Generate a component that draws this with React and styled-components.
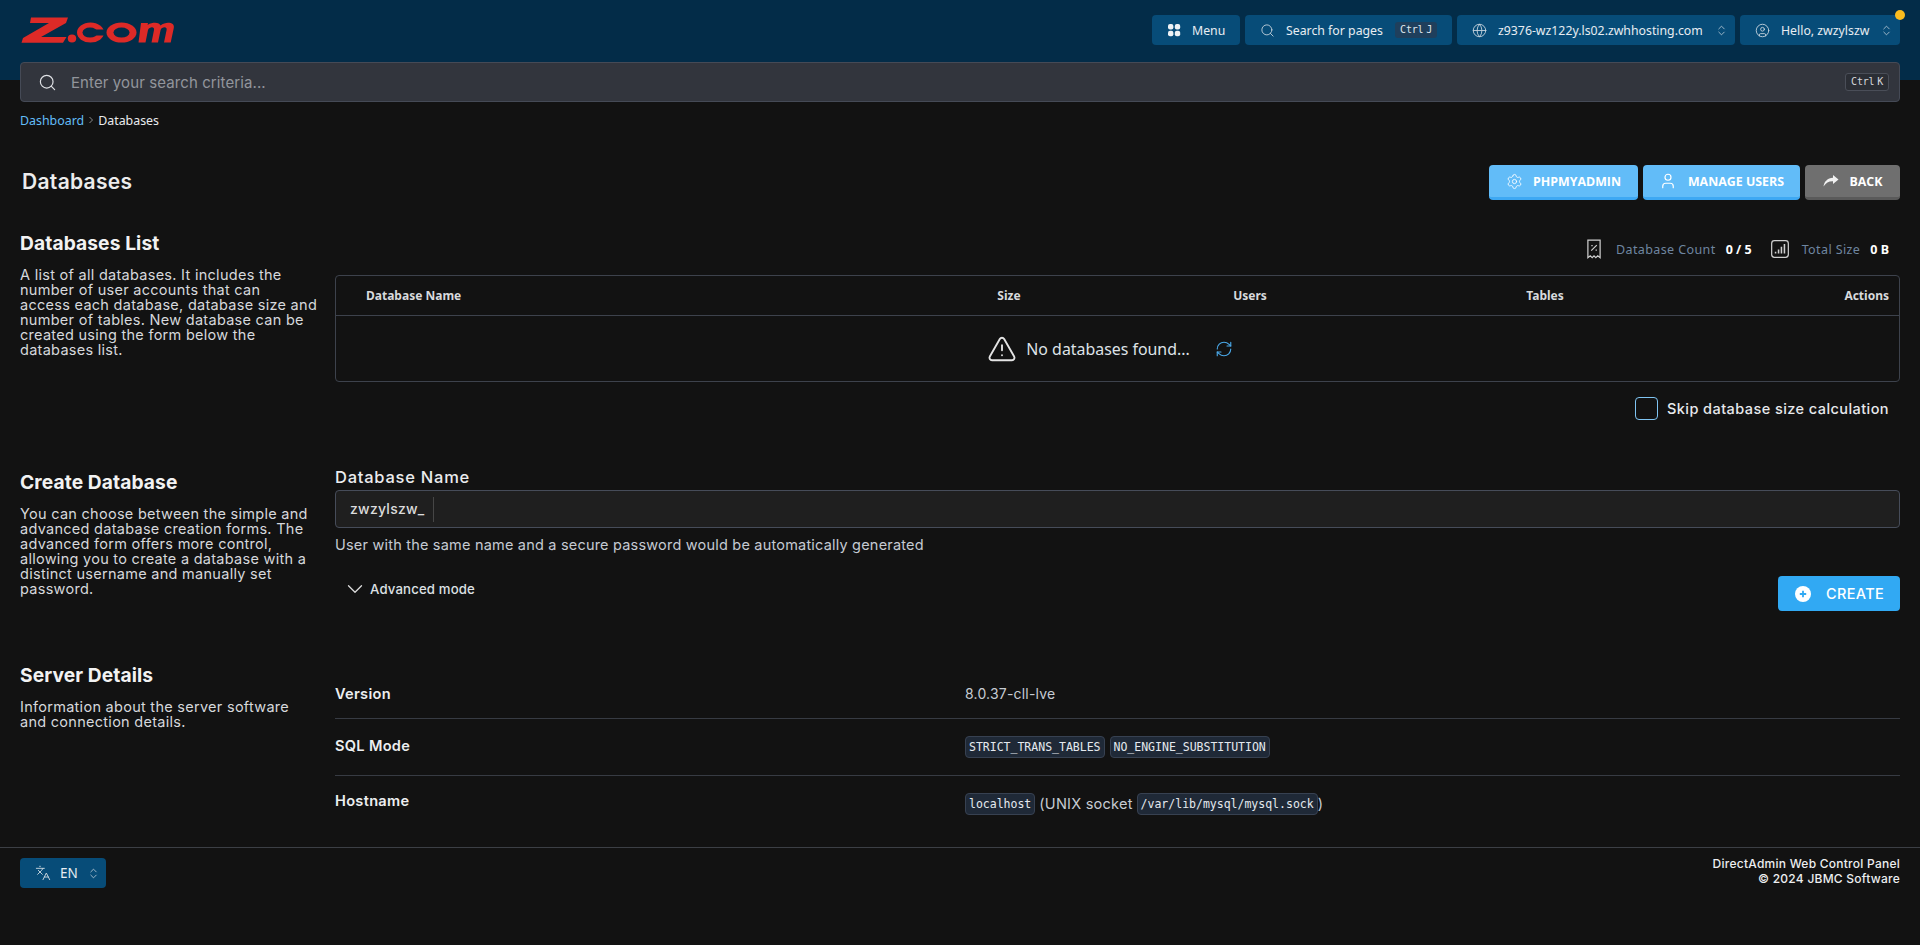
import React from 'react'
import styled, { createGlobalStyle } from 'styled-components'
import {
  Search,
  Globe,
  CircleUser,
  ChevronsUpDown,
  Settings,
  User,
  TriangleAlert,
  RefreshCw,
  ChevronDown,
  Languages,
} from 'lucide-react'

const GlobalStyle = createGlobalStyle`
  html, body {
    margin: 0;
    padding: 0;
    background: #121212;
  }
  body {
    color: #e4e6ea;
    font-family: Inter, "Noto Sans", sans-serif;
    font-size: 14px;
  }
  * { box-sizing: border-box; }
`
const Page = styled.div`
  min-height: 945px;
  background: #121212;
`
const Top = styled.header`
  padding: 0 20px;
  background: linear-gradient(#032c48 80px, transparent 80px);
`
const TopBar = styled.div`
  height: 62px;
  display: flex;
  align-items: center;
  justify-content: space-between;
`
const Logo = styled.svg`
  display: block;
  width: 156px;
  height: 28px;
`
const TopActions = styled.nav`
  display: flex;
  gap: 5px;
  margin-bottom: 2px;
`
const NavBtn = styled.button`
  position: relative;
  width: ${p => p.$w}px;
  height: 30px;
  display: flex;
  align-items: center;
  padding: 0 7px 0 15px;
  gap: 11px;
  color: #e8edf2;
  background: #074c78;
  border: none;
  border-radius: 4px;
  font-family: "Noto Sans", sans-serif;
  font-size: 12.3px;
  white-space: nowrap;
  svg { color: #c9d6df; flex: none; }
`
const Chevrons = styled(ChevronsUpDown)`
  margin-left: auto;
`
const Dot = styled.i`
  position: absolute;
  top: -5px;
  right: -5px;
  width: 10px;
  height: 10px;
  border-radius: 50%;
  background: #fbbc1e;
`
const Kbd = styled.span`
  display: inline-block;
  padding: 0 5px;
  height: 16px;
  line-height: 16px;
  border-radius: 3px;
  background: #1f3f5c;
  font-family: "DejaVu Sans Mono", monospace;
  font-size: 10px;
  letter-spacing: -0.2px;
  word-spacing: -3px;
  color: #dfe6ec;
`
const NavKbd = styled(Kbd)`
  margin: 0 8px 0 auto;
`
const SearchBar = styled.div`
  height: 40px;
  display: flex;
  align-items: center;
  padding: 0 10px 0 17px;
  background: #32353d;
  border: 1px solid #454a56;
  border-radius: 4px;
  svg { color: #dfe1e5; }
`
const SearchText = styled.span`
  flex: 1;
  margin-left: 14px;
  font-size: 15px;
  letter-spacing: 0.1px;
  color: #92959c;
`
const SearchKbd = styled(Kbd)`
  height: 18px;
  line-height: 16px;
  background: #2b2e35;
  border: 1px solid #4a4e58;
  color: #d5d7db;
`
const Crumbs = styled.div`
  display: flex;
  align-items: center;
  gap: 3px;
  margin: 10px 20px 0;
  height: 16px;
  font-family: "Noto Sans", sans-serif;
  font-size: 12.4px;
  color: #e9ebee;
  svg { color: #8a8a8a; }
`
const CrumbLink = styled.a`
  color: #62bdf8;
`
const TitleRow = styled.div`
  display: flex;
  align-items: flex-start;
  justify-content: space-between;
  margin: 37px 20px 0 22px;
`
const Title = styled.h1`
  margin: 4px 0 0;
  font-size: 21px;
  font-weight: 600;
  letter-spacing: 0.3px;
  color: #ececec;
`
const Buttons = styled.div`
  display: flex;
  gap: 5px;
`
const ActionBtn = styled.button`
  height: 35px;
  width: ${p => p.$w}px;
  display: flex;
  align-items: center;
  justify-content: center;
  gap: ${p => p.$gap || 11}px;
  color: #fff;
  background: ${p => (p.$grey ? '#6f6f6f' : '#62bcf8')};
  border: none;
  border-bottom: 3px solid ${p => (p.$grey ? '#5a5a5a' : '#3ea8f3')};
  border-radius: 4px;
  font-family: "Open Sans", sans-serif;
  font-size: 12.4px;
  font-weight: 700;
  padding: 0;
`
const Section = styled.section`
  display: grid;
  grid-template-columns: 315px 1fr;
  margin: ${p => p.$mt}px 20px 0;
`
const Side = styled.div`
  padding-top: ${p => p.$pt || 0}px;
`
const SideTitle = styled.h2`
  margin: 0 0 13px;
  font-size: 19.2px;
  font-weight: 700;
  line-height: 22px;
  letter-spacing: 0.1px;
  color: #f2f2f2;
`
const SideText = styled.p`
  margin: 0;
  width: 310px;
  font-size: 14.5px;
  line-height: 15px;
  letter-spacing: 0.28px;
  color: #d6d8dc;
`
const Stats = styled.div`
  display: flex;
  justify-content: flex-end;
  align-items: center;
  height: 22px;
  margin-top: 8px;
  padding-right: 11px;
  font-family: "Noto Sans", sans-serif;
  font-size: 12.5px;
`
const StatIcon = styled.svg`
  width: 20px;
  height: 20px;
  color: #cfcfcf;
  margin-left: ${p => p.$ml || 0}px;
`
const StatLabel = styled.span`
  margin-left: 12px;
  letter-spacing: 0.4px;
  color: #6f86a0;
`
const StatValue = styled.b`
  margin-left: 10px;
  color: #fff;
  font-weight: 700;
`
const Table = styled.div`
  margin-top: 15px;
  border: 1px solid #3d424c;
  border-radius: 4px;
`
const TableHead = styled.div`
  display: grid;
  grid-template-columns: 553px 240px 242px 348px 1fr;
  height: 40px;
  align-items: center;
  border-bottom: 1px solid #3d424c;
  font-family: "Noto Sans", sans-serif;
  font-size: 12px;
  font-weight: 700;
  color: #d8dadd;
`
const Th = styled.div`
  text-align: ${p => p.$align || 'center'};
  padding: ${p => p.$pad || 0};
`
const EmptyRow = styled.div`
  height: 65px;
  display: flex;
  align-items: center;
  justify-content: center;
  padding-right: 15px;
  font-family: "Noto Sans", sans-serif;
  font-size: 15.9px;
  color: #dfe3e8;
`
const EmptyText = styled.span`
  margin: 0 25px 0 9px;
`
const SkipRow = styled.label`
  display: flex;
  justify-content: flex-end;
  align-items: center;
  margin-top: 15px;
  padding-right: 11px;
  font-size: 14.5px;
  font-weight: 500;
  letter-spacing: 0.43px;
  color: #e7e9ec;
`
const Check = styled.span`
  width: 23px;
  height: 23px;
  margin-right: 9px;
  border: 1px solid #7fc4f2;
  border-radius: 4px;
`
const FieldLabel = styled.div`
  height: 18px;
  line-height: 18px;
  margin-bottom: 4px;
  font-size: 16.5px;
  font-weight: 500;
  letter-spacing: 0.75px;
  color: #ebecee;
`
const InputBox = styled.div`
  height: 38px;
  display: flex;
  align-items: center;
  padding-left: 14px;
  background: #1f1f1f;
  border: 1px solid #464c59;
  border-radius: 4px;
`
const Prefix = styled.span`
  height: 25px;
  line-height: 24px;
  padding-right: 8px;
  border-right: 1px solid #464646;
  font-size: 14px;
  font-weight: 500;
  letter-spacing: 0.25px;
  color: #dcdcdc;
`
const Helper = styled.div`
  margin-top: 8px;
  height: 17px;
  line-height: 17px;
  font-size: 14.5px;
  letter-spacing: 0.2px;
  color: #c5cad2;
`
const FormFoot = styled.div`
  display: flex;
  justify-content: space-between;
  align-items: flex-start;
  margin-top: 23px;
`
const Advanced = styled.div`
  display: flex;
  align-items: center;
  gap: 2px;
  margin: 0 0 0 7px;
  font-size: 13.2px;
  font-weight: 500;
  letter-spacing: 0.15px;
  color: #dde0e4;
  svg { color: #dcdcdc; }
`
const CreateBtn = styled.button`
  width: 122px;
  height: 35px;
  display: flex;
  align-items: center;
  gap: 15px;
  padding: 0 0 0 17px;
  color: #fff;
  background: #31a9f3;
  border: none;
  border-radius: 4px;
  font-family: Inter, sans-serif;
  font-size: 14.5px;
  font-weight: 500;
  letter-spacing: 0.35px;
`
const DetailRow = styled.div`
  display: grid;
  grid-template-columns: 630px 1fr;
  align-items: center;
  height: ${p => p.$h}px;
  padding-top: ${p => p.$pt || 0}px;
  border-bottom: ${p => (p.$last ? 'none' : '1px solid #373b43')};
`
const DetailKey = styled.div`
  padding-bottom: ${p => p.$pb || 0}px;
  font-size: 14.6px;
  font-weight: 600;
  letter-spacing: 0.3px;
  color: #eceef0;
`
const DetailVal = styled.div`
  display: flex;
  align-items: center;
  gap: ${p => p.$gap || 0}px;
  font-size: 14px;
  letter-spacing: 0.2px;
  color: #c6cbd2;
`
const Code = styled.code`
  display: inline-block;
  height: 22px;
  line-height: 20px;
  padding: 0 3px;
  background: #1f2937;
  border: 1px solid #374151;
  border-radius: 4px;
  font-family: "DejaVu Sans Mono", monospace;
  font-size: 11.55px;
  letter-spacing: -0.03px;
  color: #e5e9ef;
`
const Plain = styled.span`
  margin: ${p => p.$m || 0};
  font-size: 14.6px;
`
const Footer = styled.footer`
  display: flex;
  justify-content: space-between;
  align-items: flex-start;
  margin-top: 16px;
  padding: 10px 20px 0;
  border-top: 1px solid #3c3f45;
`
const LangBtn = styled(NavBtn)`
  font-size: 13.5px;
  gap: 9px;
`
const Legal = styled.div`
  margin-top: -2px;
  text-align: right;
  font-size: 12px;
  font-weight: 500;
  line-height: 15px;
  letter-spacing: 0.25px;
  color: #eceef0;
`

const ZLogo = () => (
  <Logo viewBox="0 0 156 28" role="img" aria-label="Z.com">
    <path fill="#dd2a27" d="M11 0.5 H48 L46 6 L21 20 H46.5 L43 25.8 H1.5 L3 21 L29 6 H10 Z" />
    <ellipse cx="52" cy="21.5" rx="4.2" ry="4" fill="#dd2a27" />
    <ellipse cx="70.5" cy="15.6" rx="13.5" ry="10" fill="#dd2a27" />
    <ellipse cx="70" cy="15.6" rx="7.5" ry="5" fill="#032c48" />
    <path fill="#032c48" d="M73 12.6 H86 L84 18.6 H72 Z" />
    <ellipse cx="101.5" cy="15.6" rx="15" ry="10" fill="#dd2a27" />
    <ellipse cx="101.5" cy="15.6" rx="8" ry="5" fill="#032c48" />
    <path
      fill="#dd2a27"
      d="M121 6 H128 L127.6 8 C130 6 133 5.7 135 5.7 C138 5.7 140 6.8 140.6 8.5 C142.5 6.5 146 5.7 148 5.7 C152 5.7 154.5 7.5 153.8 11 L150.7 25.5 H144 L146.6 13 C147 11.2 146 10.3 144.5 10.3 C143 10.3 141 11.2 140.6 13 L138 25.5 H131.5 L134 13 C134.4 11.2 133.4 10.3 132 10.3 C130.5 10.3 128.5 11.2 128 13 L125.5 25.5 H118.5 Z"
    />
  </Logo>
)

const GridIcon = () => (
  <svg width="14" height="14" viewBox="0 0 14 14" fill="#eef2f5">
    <rect x="1" y="1" width="5.4" height="5.4" rx="2" />
    <rect x="7.8" y="1" width="5.4" height="5.4" rx="2" />
    <rect x="1" y="7.8" width="5.4" height="5.4" rx="2" />
    <rect x="7.8" y="7.8" width="5.4" height="5.4" rx="2" />
  </svg>
)

const ShareArrow = () => (
  <svg width="16" height="14" viewBox="0 0 16 14" fill="#f1f1f1">
    <path d="M10 1 L15.5 5.5 L10 10 V7.2 C6 7 3 8.5 0.5 12.5 C1.2 7.5 4.5 4.2 10 3.8 Z" />
  </svg>
)

const CrumbArrow = () => (
  <svg width="8" height="8" viewBox="0 0 8 8" fill="none" stroke="currentColor" strokeWidth="1">
    <path d="M2.5 1 L5.5 4 L2.5 7" />
  </svg>
)

const ReceiptIcon = () => (
  <StatIcon viewBox="0 0 18 18" fill="none" stroke="currentColor" strokeWidth="1.1">
    <path d="M3.5 1 H14.5 V16.8 L12.4 15.2 L10.6 16.8 L9 15.2 L7.4 16.8 L5.6 15.2 L3.5 16.8 Z" />
    <path d="M6.5 10.5 L11.5 5.5 M6.6 6 h1.2 M10.4 10 h1.2" />
  </StatIcon>
)

const SignalIcon = () => (
  <StatIcon $ml={18} viewBox="0 0 18 18" fill="none" stroke="currentColor" strokeWidth="1.1">
    <rect x="1.5" y="1.5" width="15" height="15" rx="2.5" />
    <path d="M5 13 V11.5 M7.7 13 V9.5 M10.3 13 V7 M13 13 V4.5" strokeWidth="1.4" />
  </StatIcon>
)

const PlusDisc = () => (
  <svg width="16" height="16" viewBox="0 0 16 16">
    <circle cx="8" cy="8" r="8" fill="#fff" />
    <path d="M8 4.8 V11.2 M4.8 8 H11.2" stroke="#31a9f3" strokeWidth="1.8" />
  </svg>
)

export default function App() {
  return (
    <Page>
      <GlobalStyle />
      <Top>
        <TopBar>
          <ZLogo />
          <TopActions>
            <NavBtn $w={88}>
              <GridIcon />
              <span>Menu</span>
            </NavBtn>
            <NavBtn $w={207}>
              <Search size={15} strokeWidth={1.4} />
              <span>Search for pages</span>
              <NavKbd>Ctrl J</NavKbd>
            </NavBtn>
            <NavBtn $w={278}>
              <Globe size={15} strokeWidth={1.4} />
              <span>z9376-wz122y.ls02.zwhhosting.com</span>
              <Chevrons size={13} strokeWidth={1.4} />
            </NavBtn>
            <NavBtn $w={160}>
              <CircleUser size={15} strokeWidth={1.4} />
              <span>Hello, zwzylszw</span>
              <Chevrons size={13} strokeWidth={1.4} />
              <Dot />
            </NavBtn>
          </TopActions>
        </TopBar>
        <SearchBar>
          <Search size={19} strokeWidth={1.5} />
          <SearchText>Enter your search criteria...</SearchText>
          <SearchKbd>Ctrl K</SearchKbd>
        </SearchBar>
      </Top>

      <Crumbs>
        <CrumbLink>Dashboard</CrumbLink>
        <CrumbArrow />
        <span>Databases</span>
      </Crumbs>

      <TitleRow>
        <Title>Databases</Title>
        <Buttons>
          <ActionBtn $w={149} $gap={10}>
            <Settings size={17} strokeWidth={1.2} />
            PHPMYADMIN
          </ActionBtn>
          <ActionBtn $w={157}>
            <User size={18} strokeWidth={1.6} />
            MANAGE USERS
          </ActionBtn>
          <ActionBtn $w={95} $grey>
            <ShareArrow />
            BACK
          </ActionBtn>
        </Buttons>
      </TitleRow>

      <Section $mt={30}>
        <Side $pt={2}>
          <SideTitle>Databases List</SideTitle>
          <SideText>
            A list of all databases. It includes the<br />
            number of user accounts that can<br />
            access each database, database size and<br />
            number of tables. New database can be<br />
            created using the form below the<br />
            databases list.
          </SideText>
        </Side>
        <div>
          <Stats>
            <ReceiptIcon />
            <StatLabel>Database Count</StatLabel>
            <StatValue>0 / 5</StatValue>
            <SignalIcon />
            <StatLabel>Total Size</StatLabel>
            <StatValue>0 B</StatValue>
          </Stats>
          <Table>
            <TableHead>
              <Th $align="left" $pad="0 0 0 30px">Database Name</Th>
              <Th>Size</Th>
              <Th>Users</Th>
              <Th>Tables</Th>
              <Th $align="right" $pad="0 10px 0 0">Actions</Th>
            </TableHead>
            <EmptyRow>
              <TriangleAlert size={30} strokeWidth={1.5} color="#e4e4e4" />
              <EmptyText>No databases found...</EmptyText>
              <RefreshCw size={18} strokeWidth={1.5} color="#4aa8e8" />
            </EmptyRow>
          </Table>
          <SkipRow>
            <Check />
            Skip database size calculation
          </SkipRow>
        </div>
      </Section>

      <Section $mt={48}>
        <Side $pt={3}>
          <SideTitle>Create Database</SideTitle>
          <SideText>
            You can choose between the simple and<br />
            advanced database creation forms. The<br />
            advanced form offers more control,<br />
            allowing you to create a database with a<br />
            distinct username and manually set<br />
            password.
          </SideText>
        </Side>
        <div>
          <FieldLabel>Database Name</FieldLabel>
          <InputBox>
            <Prefix>zwzylszw_</Prefix>
          </InputBox>
          <Helper>User with the same name and a secure password would be automatically generated</Helper>
          <FormFoot>
            <Advanced>
              <ChevronDown size={26} strokeWidth={1.2} />
              Advanced mode
            </Advanced>
            <CreateBtn>
              <PlusDisc />
              CREATE
            </CreateBtn>
          </FormFoot>
        </div>
      </Section>

      <Section $mt={53}>
        <Side>
          <SideTitle>Server Details</SideTitle>
          <SideText>
            Information about the server software<br />
            and connection details.
          </SideText>
        </Side>
        <div>
          <DetailRow $h={55} $pt={5}>
            <DetailKey>Version</DetailKey>
            <DetailVal>8.0.37-cll-lve</DetailVal>
          </DetailRow>
          <DetailRow $h={57}>
            <DetailKey $pb={3}>SQL Mode</DetailKey>
            <DetailVal $gap={5}>
              <Code>STRICT_TRANS_TABLES</Code>
              <Code>NO_ENGINE_SUBSTITUTION</Code>
            </DetailVal>
          </DetailRow>
          <DetailRow $h={55} $last>
            <DetailKey $pb={5}>Hostname</DetailKey>
            <DetailVal>
              <Code>localhost</Code>
              <Plain $m="0 4px">(UNIX socket</Plain>
              <Code>/var/lib/mysql/mysql.sock</Code>
              <Plain>)</Plain>
            </DetailVal>
          </DetailRow>
        </div>
      </Section>

      <Footer>
        <LangBtn $w={86}>
          <Languages size={16} strokeWidth={1.4} />
          <span>EN</span>
          <Chevrons size={13} strokeWidth={1.4} />
        </LangBtn>
        <Legal>
          DirectAdmin Web Control Panel<br />
          © 2024 JBMC Software
        </Legal>
      </Footer>
    </Page>
  )
}
